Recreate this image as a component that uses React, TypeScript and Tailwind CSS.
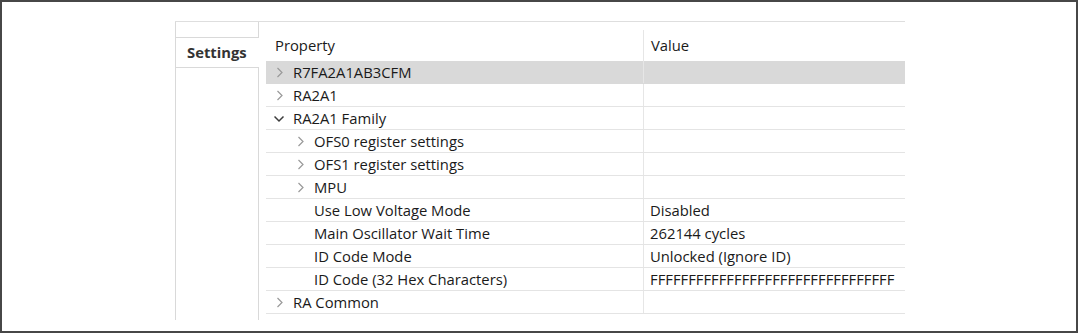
type Row = {
  label: string;
  value?: string;
  level: number;
  toggle?: "open" | "closed";
  selected?: boolean;
};

const rows: Row[] = [
  { label: "R7FA2A1AB3CFM", level: 0, toggle: "closed", selected: true },
  { label: "RA2A1", level: 0, toggle: "closed" },
  { label: "RA2A1 Family", level: 0, toggle: "open" },
  { label: "OFS0 register settings", level: 1, toggle: "closed" },
  { label: "OFS1 register settings", level: 1, toggle: "closed" },
  { label: "MPU", level: 1, toggle: "closed" },
  { label: "Use Low Voltage Mode", value: "Disabled", level: 1 },
  { label: "Main Oscillator Wait Time", value: "262144 cycles", level: 1 },
  { label: "ID Code Mode", value: "Unlocked (Ignore ID)", level: 1 },
  { label: "ID Code (32 Hex Characters)", value: "FFFFFFFFFFFFFFFFFFFFFFFFFFFFFFFF", level: 1 },
  { label: "RA Common", level: 0, toggle: "closed" },
];

function Chevron({ kind }: { kind?: "open" | "closed" }) {
  return (
    <svg width="19" height="22" viewBox="0 0 19 22" className="shrink-0">
      {kind === "closed" && (
        <polyline points="3.5,7 8,11.5 3.5,16" fill="none" stroke="#999999" strokeWidth="1.2" />
      )}
      {kind === "open" && (
        <polyline points="0.5,9.5 5,14 9.5,9.5" fill="none" stroke="#3c3c3c" strokeWidth="1.5" />
      )}
    </svg>
  );
}

export default function App() {
  return (
    <div
      className="h-[334px] w-[1080px] bg-white text-[14.8px] text-[#1a1a1a]"
      style={{ fontFamily: '"Open Sans", sans-serif' }}
    >
      <div className="h-[333px] w-[1078px] border-2 border-[#474747] pl-[173px] pt-[19px]">
        <div className="flex w-[730px] border-t border-[#dedede]">
          {/* tab column */}
          <div className="flex w-[84px] flex-col">
            <div className="h-[15px] border-x border-[#d9d9d9]" />
            <div className="h-[30px] border-l border-t border-[#d9d9d9] pl-[11px] pt-[4px] font-bold leading-[20px] text-[#333]">
              Settings
            </div>
            <div className="h-[253px] border-x border-t border-[#d9d9d9]" />
          </div>

          {/* property table */}
          <div className="ml-[7px] w-[639px]">
            <div className="flex h-[39px]">
              <div className="w-[377px] pl-[9px] pt-[13px] leading-[20px]">Property</div>
              <div className="mt-[8px] flex-1 border-l border-[#e6e6e6] pl-[7px] pt-[5px] leading-[20px]">
                Value
              </div>
            </div>
            {rows.map((r) => (
              <div
                key={r.label}
                className={
                  r.selected
                    ? "flex h-[23px] border-b border-transparent bg-[#d9d9d9]"
                    : "flex h-[23px] border-b border-[#e4e4e4]"
                }
              >
                <div
                  className={
                    r.level === 0
                      ? "flex w-[377px] items-center pl-[8px] leading-[22px]"
                      : "flex w-[377px] items-center pl-[29px] leading-[22px]"
                  }
                >
                  <Chevron kind={r.toggle} />
                  <span className="whitespace-nowrap">{r.label}</span>
                </div>
                <div className="flex-1 whitespace-nowrap border-l border-[#e6e6e6] pl-[6px] leading-[22px]">
                  {r.value}
                </div>
              </div>
            ))}
          </div>
        </div>
      </div>
    </div>
  );
}
